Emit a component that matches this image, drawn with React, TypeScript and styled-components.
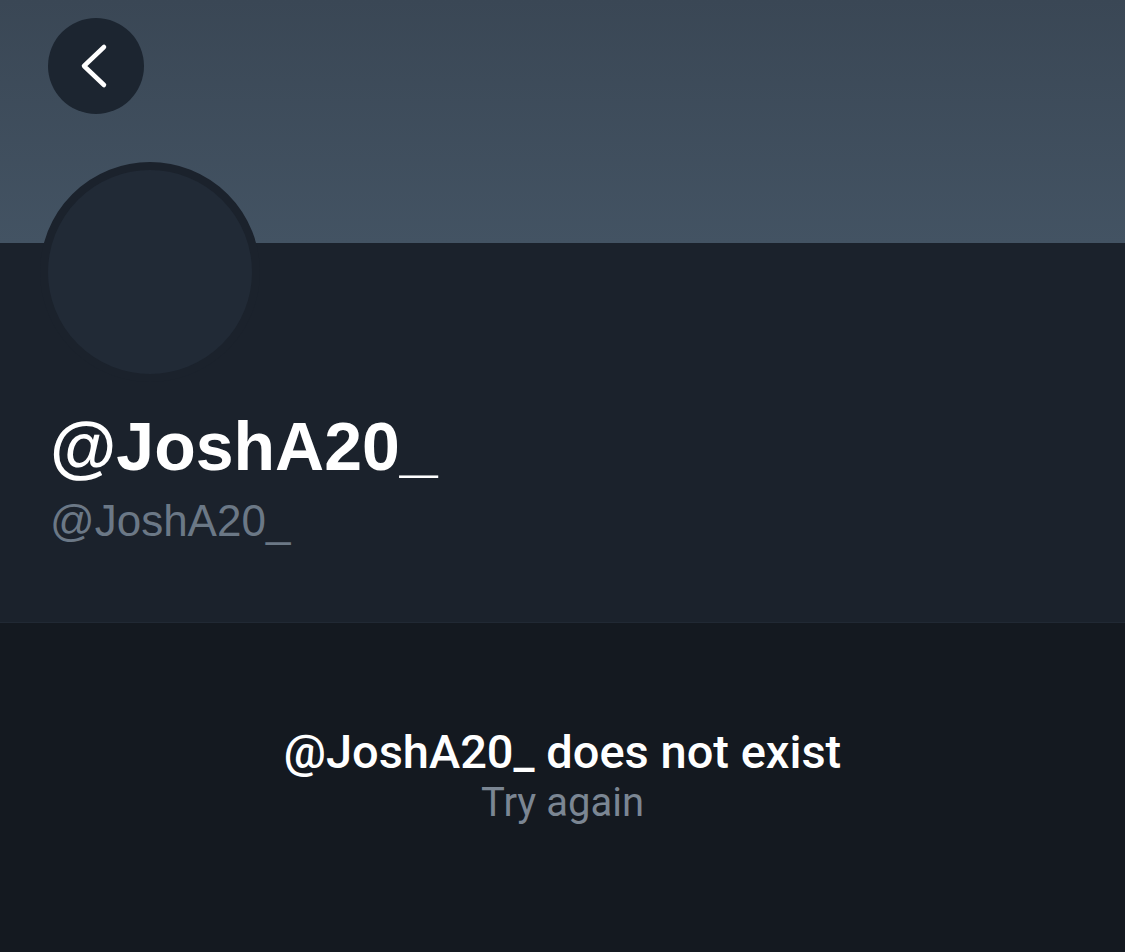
import React from "react"
import styled, { createGlobalStyle } from "styled-components"

const GlobalStyle = createGlobalStyle`
  html, body {
    margin: 0;
    padding: 0;
    background: #141920;
  }
  body {
    font-family: "Liberation Sans", Arial, sans-serif;
  }
`

const Page = styled.div`
  width: 1125px;
  height: 952px;
  display: flex;
  flex-direction: column;
  overflow: hidden;
  background: #141920;
`

const Banner = styled.div`
  height: 243px;
  flex-shrink: 0;
  background: linear-gradient(180deg, #3a4755 0%, #435363 100%);
  padding: 18px 0 0 48px;
  box-sizing: border-box;
`

const BackButton = styled.button`
  width: 96px;
  height: 96px;
  border-radius: 50%;
  border: none;
  background: #1c2530;
  display: flex;
  align-items: center;
  justify-content: center;
  padding: 0;
  cursor: pointer;
`

const Profile = styled.section`
  height: 379px;
  flex-shrink: 0;
  background: #1b222c;
  padding: 0 0 0 40px;
  box-sizing: border-box;
  display: flex;
  flex-direction: column;
`

const Avatar = styled.div`
  width: 204px;
  height: 204px;
  border-radius: 50%;
  background: #212a36;
  border: 8px solid #1b222c;
  margin-top: -81px;
  flex-shrink: 0;
`

const DisplayName = styled.h1`
  margin: 24px 0 0 10px;
  font-family: "Liberation Sans", Arial, sans-serif;
  font-weight: 700;
  font-size: 68px;
  line-height: 80px;
  color: #ffffff;
`

const Handle = styled.div`
  margin: 7px 0 0 10px;
  font-family: "Liberation Sans", Arial, sans-serif;
  font-size: 44px;
  line-height: 56px;
  color: #6b7886;
`

const Empty = styled.section`
  flex: 1;
  border-top: 1px solid #212934;
  display: flex;
  flex-direction: column;
  align-items: center;
  padding-top: 101px;
`

const Message = styled.div`
  font-family: Roboto, "Liberation Sans", sans-serif;
  font-weight: 500;
  font-size: 47px;
  line-height: 56px;
  color: #ffffff;
`

const Retry = styled.div`
  font-family: Roboto, "Liberation Sans", sans-serif;
  font-size: 40px;
  line-height: 46px;
  color: #7b8693;
`

export default function App() {
  return (
    <Page>
      <GlobalStyle />
      <Banner>
        <BackButton aria-label="Back">
          <svg width="96" height="96" viewBox="0 0 96 96" fill="none">
            <path
              d="M56 29 L36 48 L56 67"
              stroke="#ffffff"
              strokeWidth="4.5"
              strokeLinecap="round"
              strokeLinejoin="round"
            />
          </svg>
        </BackButton>
      </Banner>
      <Profile>
        <Avatar />
        <DisplayName>@JoshA20_</DisplayName>
        <Handle>@JoshA20_</Handle>
      </Profile>
      <Empty>
        <Message>@JoshA20_ does not exist</Message>
        <Retry>Try again</Retry>
      </Empty>
    </Page>
  )
}
